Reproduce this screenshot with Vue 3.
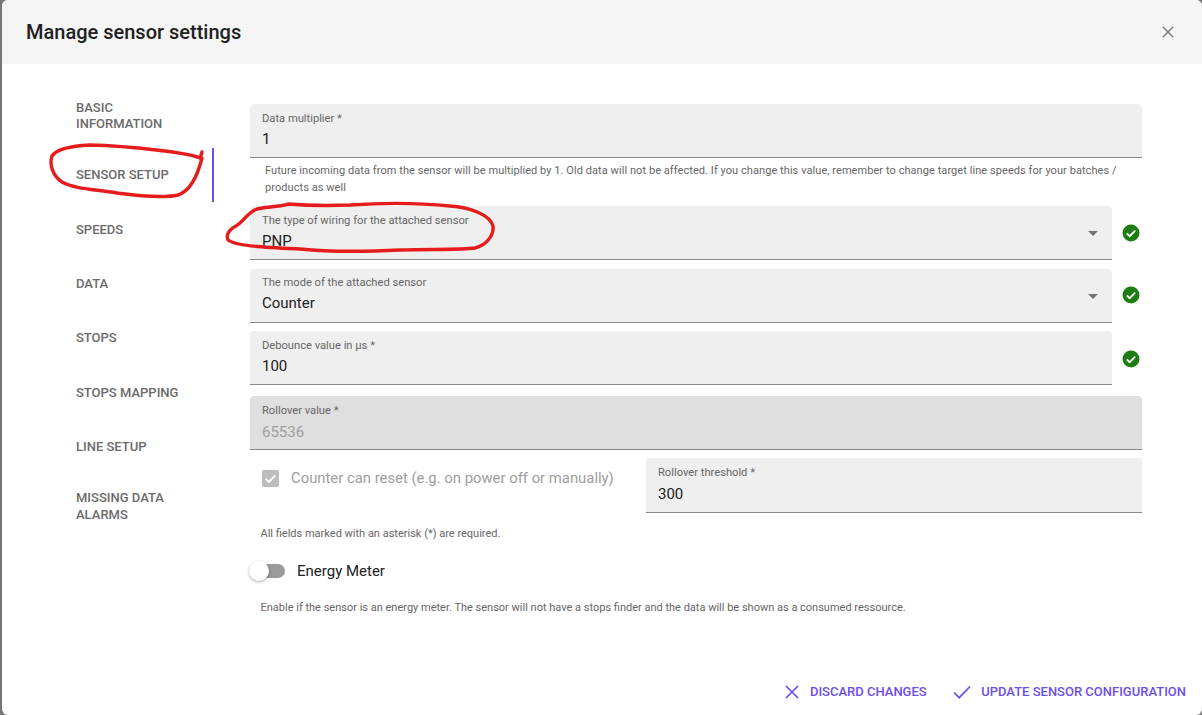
<script setup>
const tabs = [
  { label: 'Basic information', cls: 'two' },
  { label: 'Sensor setup', cls: 'active' },
  { label: 'Speeds' },
  { label: 'Data' },
  { label: 'Stops' },
  { label: 'Stops mapping' },
  { label: 'Line setup' },
  { label: 'Missing data alarms', cls: 'two last' },
]
</script>

<template>
  <div class="page">
    <div class="dialog">
      <header class="head">
        <h1>Manage sensor settings</h1>
        <svg class="close" width="12" height="12" viewBox="0 0 12 12"><path d="M1 1l10 10M11 1L1 11" stroke="#757575" stroke-width="1.4" fill="none"/></svg>
      </header>

      <div class="body">
        <nav class="tabs">
          <div v-for="t in tabs" :key="t.label" class="tab" :class="t.cls"><span>{{ t.label }}</span></div>
        </nav>

        <main class="form">
          <div class="field f1">
            <label>Data multiplier *</label>
            <div class="value">1</div>
          </div>
          <p class="hint">Future incoming data from the sensor will be multiplied by 1. Old data will not be affected. If you change this value, remember to change target line speeds for your batches / products as well</p>

          <div class="rowcheck r1">
            <div class="field grow">
              <label>The type of wiring for the attached sensor</label>
              <div class="value">PNP</div>
              <i class="caret"></i>
            </div>
            <svg class="ok" viewBox="0 0 18 18" width="18" height="18"><circle cx="9" cy="9" r="8.5" fill="#1e7d12"/><path d="M4.8 9.4l2.9 2.8 5.5-5.6" stroke="#fff" stroke-width="1.9" fill="none"/></svg>
          </div>

          <div class="rowcheck r2">
            <div class="field grow">
              <label>The mode of the attached sensor</label>
              <div class="value">Counter</div>
              <i class="caret"></i>
            </div>
            <svg class="ok" viewBox="0 0 18 18" width="18" height="18"><circle cx="9" cy="9" r="8.5" fill="#1e7d12"/><path d="M4.8 9.4l2.9 2.8 5.5-5.6" stroke="#fff" stroke-width="1.9" fill="none"/></svg>
          </div>

          <div class="rowcheck r3">
            <div class="field grow">
              <label>Debounce value in µs *</label>
              <div class="value">100</div>
            </div>
            <svg class="ok" viewBox="0 0 18 18" width="18" height="18"><circle cx="9" cy="9" r="8.5" fill="#1e7d12"/><path d="M4.8 9.4l2.9 2.8 5.5-5.6" stroke="#fff" stroke-width="1.9" fill="none"/></svg>
          </div>

          <div class="field disabled">
            <label>Rollover value *</label>
            <div class="value">65536</div>
          </div>

          <div class="split">
            <div class="check">
              <svg width="17" height="17" viewBox="0 0 17 17"><rect width="17" height="17" rx="2" fill="#bdbdbd"/><path d="M3.6 8.8l3.3 3.2 6.4-6.6" stroke="#fff" stroke-width="1.8" fill="none"/></svg>
              <span>Counter can reset (e.g. on power off or manually)</span>
            </div>
            <div class="field half">
              <label>Rollover threshold *</label>
              <div class="value">300</div>
            </div>
          </div>

          <p class="note n1">All fields marked with an asterisk (*) are required.</p>

          <div class="toggle">
            <div class="track"><div class="thumb"></div></div>
            <span>Energy Meter</span>
          </div>

          <p class="note n2">Enable if the sensor is an energy meter. The sensor will not have a stops finder and the data will be shown as a consumed ressource.</p>
        </main>
      </div>

      <footer class="foot">
        <button type="button">
          <svg width="16" height="16" viewBox="0 0 16 16"><path d="M2 2l12 12M14 2L2 14" stroke="#6d4ee8" stroke-width="1.7" fill="none"/></svg>
          Discard changes
        </button>
        <button type="button">
          <svg width="18" height="14" viewBox="0 0 18 14"><path d="M1 7.5l5.2 5.2L17 1.5" stroke="#6d4ee8" stroke-width="1.7" fill="none"/></svg>
          Update sensor configuration
        </button>
      </footer>

      <svg class="scribble" width="1202" height="715" viewBox="0 0 1202 715">
        <path d="M202 152C201 156 200 157 200 158C190 153 130 146 90 145C70 146 56 150 52 156C49 165 53 176 62 182C75 189 92 189 117 193C140 196 165 198 178 195C190 191 197 178 202 158" />
        <path d="M288 204C285 206 272 206 257 209C247 213 243 222 236 226C228 230 226 236 228 240C236 246 260 247 300 249C330 252 360 252 400 250C430 249 460 250 475 248C487 245 494 235 493 226C490 215 470 207 450 206C420 203 380 203 350 205C325 206 300 205 288 204Z" />
      </svg>
    </div>
  </div>
</template>

<style>
html, body { margin: 0; background: #777; overflow: hidden; }
</style>

<style scoped>
.page {
  width: 1202px;
  height: 715px;
  background: #777;
  padding-left: 2px;
  box-sizing: border-box;
  overflow: hidden;
  font-family: Roboto, "Liberation Sans", sans-serif;
}
.dialog {
  position: relative;
  width: 1200px;
  height: 715px;
  background: #fff;
  border-radius: 6px;
  overflow: hidden;
  display: flex;
  flex-direction: column;
}
.head {
  height: 64px;
  flex: none;
  background: #f5f5f5;
  display: flex;
  align-items: center;
  justify-content: space-between;
  padding: 0 28px 0 24px;
}
.head h1 {
  margin: 0;
  font-size: 20px;
  font-weight: 500;
  color: #212121;
}
.body { display: flex; flex: 1; min-height: 0; }
.tabs {
  width: 212px;
  flex: none;
  padding-top: 20px;
  box-sizing: border-box;
  display: flex;
  flex-direction: column;
}
.tab {
  height: 54.4px;
  display: flex;
  align-items: center;
  padding-left: 74px;
  padding-right: 28px;
  font-size: 13px;
  line-height: 16px;
  font-weight: 500;
  color: #6b6b6b;
  text-transform: uppercase;
  border-right: 2px solid transparent;
  width: 108px;
}
.tab.two { height: 64px; }
.tab.active { border-right-color: #6d4ee8; }
.tab.last { line-height: 17px; }
.form {
  margin-left: 36px;
  width: 892px;
  padding-top: 40px;
  box-sizing: border-box;
}
.field {
  position: relative;
  height: 54px;
  box-sizing: border-box;
  background: #efefef;
  border-bottom: 1px solid #8a8a8a;
  border-radius: 4px 4px 0 0;
  padding: 8px 12px 0;
}
.field label {
  display: block;
  font-size: 11.17px;
  line-height: 13px;
  color: #666;
}
.value {
  margin-top: 3px;
  font-size: 15px;
  line-height: 22px;
  color: #212121;
}
.hint {
  margin: 0;
  height: 48px;
  box-sizing: border-box;
  padding: 4px 15px 0;
  font-size: 11px;
  line-height: 17px;
  letter-spacing: 0.065px;
  color: #666;
}
.rowcheck { display: flex; align-items: center; gap: 10px; }
.grow { flex: 1; }
.ok { flex: none; margin-right: 2px; }
.r2 { margin-top: 9px; }
.r2 .field { padding-top: 7px; }
.r2 .ok { margin-top: -2px; }
.r3 { margin-top: 8px; }
.r3 .ok { margin-top: 1px; }
.caret {
  position: absolute;
  right: 14px;
  top: 25px;
  border-left: 5px solid transparent;
  border-right: 5px solid transparent;
  border-top: 5px solid #757575;
}
.disabled {
  margin-top: 11px;
  background: #dfdfdf;
}
.disabled .value { color: #9e9e9e; margin-top: 4px; }
.split {
  display: flex;
  justify-content: space-between;
  margin-top: 8px;
}
.check {
  display: flex;
  align-items: center;
  gap: 12px;
  padding: 0 0 15px 12px;
  font-size: 14.85px;
  color: #9e9e9e;
}
.half { width: 496px; height: 55px; }
.half .value { margin-top: 4px; }
.note {
  margin: 0;
  padding-left: 10.5px;
  font-size: 11px;
  line-height: 14px;
  color: #666;
}
.n1 { margin-top: 14px; }
.n2 { margin-top: 20px; }
.toggle {
  display: flex;
  align-items: center;
  gap: 12px;
  margin-top: 20px;
  height: 20px;
  font-size: 15px;
  color: #212121;
}
.track {
  position: relative;
  width: 29px;
  height: 14px;
  margin-left: 6px;
  border-radius: 7px;
  background: #9b9b9b;
}
.thumb {
  position: absolute;
  left: -7px;
  top: -3px;
  width: 20px;
  height: 20px;
  border-radius: 50%;
  background: #fff;
  box-shadow: 0 1px 3px rgba(0, 0, 0, .35);
}
.foot {
  position: absolute;
  right: 16px;
  bottom: 13px;
  display: flex;
  gap: 26.5px;
}
.foot button {
  display: flex;
  align-items: center;
  gap: 10px;
  padding: 0;
  border: 0;
  background: none;
  font-family: inherit;
  font-size: 13px;
  line-height: 20px;
  font-weight: 500;
  text-transform: uppercase;
  color: #6d4ee8;
}
.scribble {
  position: absolute;
  left: -2px;
  top: 0;
  pointer-events: none;
}
.scribble path {
  fill: none;
  stroke: #e61b1b;
  stroke-width: 3.4;
  stroke-linecap: round;
  stroke-linejoin: round;
}
</style>
